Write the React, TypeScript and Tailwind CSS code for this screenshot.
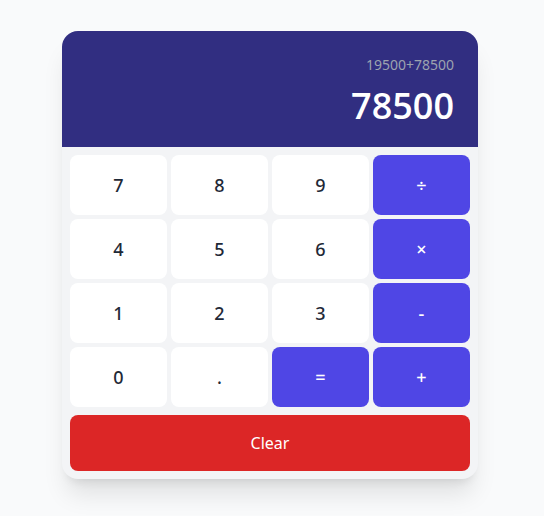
import React from "react";

const keys: { label: string; op?: boolean }[] = [
  { label: "7" },
  { label: "8" },
  { label: "9" },
  { label: "÷", op: true },
  { label: "4" },
  { label: "5" },
  { label: "6" },
  { label: "×", op: true },
  { label: "1" },
  { label: "2" },
  { label: "3" },
  { label: "-", op: true },
  { label: "0" },
  { label: "." },
  { label: "=", op: true },
  { label: "+", op: true },
];

export default function App() {
  return (
    <div className="min-h-[516px] w-full bg-[#f9fafb] pt-[31px] font-['Noto_Sans',sans-serif]">
      <div className="ml-[62px] w-[416px] overflow-hidden rounded-2xl bg-[#f3f4f6] shadow-xl">
        {/* Display */}
        <div className="flex h-[116px] flex-col items-end bg-[#312e81] px-6 pt-6">
          <div className="text-sm leading-5 text-[#9ca3af]">19500+78500</div>
          <div className="mt-[11px] font-['Open_Sans',sans-serif] text-4xl leading-10 font-semibold text-white">
            78500
          </div>
        </div>

        {/* Keypad */}
        <div className="p-2">
          <div className="grid grid-cols-4 gap-1">
            {keys.map((k) => (
              <button
                key={k.label}
                className={
                  k.op
                    ? "h-[60px] rounded-lg bg-[#4f46e5] text-lg font-medium text-white"
                    : "h-[60px] rounded-lg bg-white text-lg font-medium text-[#1f2937]"
                }
              >
                {k.label}
              </button>
            ))}
          </div>
          <button className="mt-2 h-14 w-full rounded-lg bg-[#dc2626] text-base text-white">
            Clear
          </button>
        </div>
      </div>
    </div>
  );
}
